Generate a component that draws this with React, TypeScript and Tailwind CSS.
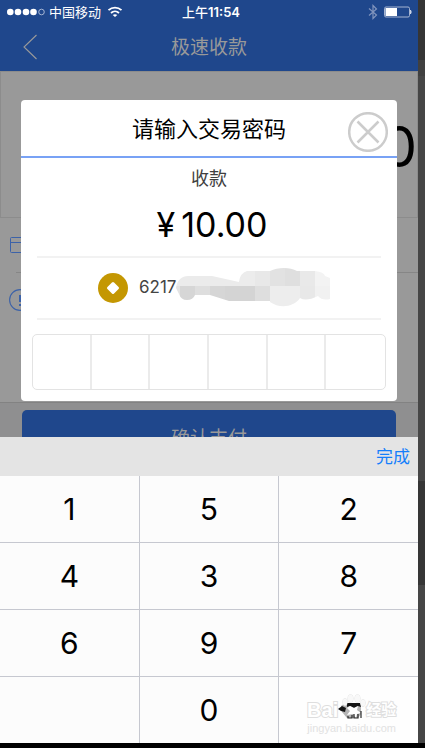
import React from "react";

const KEYS = ["1", "5", "2", "4", "3", "8", "6", "9", "7"];

const MOSAIC: [number, number, number, number, string][] = [
  [176, 266, 64, 19, "#ebebeb"],
  [240, 266, 15, 19, "#ececec"],
  [255, 266, 15, 19, "#e8e8e8"],
  [270, 266, 15, 19, "#e2e2e2"],
  [285, 266, 15, 19, "#dfdfdf"],
  [300, 266, 15, 19, "#e9e9e9"],
  [315, 266, 15, 19, "#f3f3f3"],
  [176, 285, 4, 15, "#e3e3e3"],
  [180, 285, 15, 15, "#d6d6d6"],
  [195, 285, 15, 15, "#dedede"],
  [210, 285, 15, 15, "#d6d6d6"],
  [225, 285, 30, 15, "#d4d4d4"],
  [255, 285, 15, 15, "#dedede"],
  [270, 285, 30, 21, "#ededed"],
  [300, 285, 15, 15, "#e8e8e8"],
  [315, 285, 15, 15, "#f1f1f1"],
];

function StatusBar() {
  return (
    <div className="grid h-6 grid-cols-3 items-center px-2 text-[13px] leading-6 text-white">
      <div className="flex items-center gap-1">
        <svg className="-ml-px h-2 w-[38px] shrink-0" viewBox="0 0 38 8" aria-hidden="true">
          <circle cx="3.3" cy="4" r="3.3" fill="white" />
          <circle cx="11" cy="4" r="3.3" fill="white" />
          <circle cx="19" cy="4" r="3.3" fill="white" />
          <circle cx="26.5" cy="4" r="3.3" fill="white" />
          <circle cx="34.5" cy="4" r="2.8" fill="none" stroke="#c5cfe3" strokeWidth="0.8" />
        </svg>
        <span className="whitespace-nowrap">中国移动</span>
        <svg className="ml-0.5 h-3 w-4 shrink-0" viewBox="0 0 16 12" fill="none" stroke="white" strokeWidth="1.8" aria-hidden="true">
          <path d="M1.5 4.2C5.2 0.7 10.8 0.7 14.5 4.2" />
          <path d="M4 7C6.3 4.9 9.7 4.9 12 7" />
          <path d="M8 11L5.7 8.9C7 7.9 9 7.9 10.3 8.9Z" fill="white" stroke="none" />
        </svg>
      </div>
      <div className="pl-1 text-center font-medium whitespace-nowrap">
        上午<span className="font-semibold">11:54</span>
      </div>
      <div className="-mr-0.5 flex items-center justify-end gap-1.5">
        <svg className="h-4 w-2.5" viewBox="0 0 10 16" fill="none" stroke="#8094bd" strokeWidth="1.2" aria-hidden="true">
          <path d="M1 4.5L8.5 11L5 14.5V1.5L8.5 5L1 11.5" />
        </svg>
        <svg className="h-3 w-7" viewBox="0 0 28 12" aria-hidden="true">
          <rect x="0.5" y="1" width="25" height="10" rx="1.5" fill="none" stroke="#a5b4d1" />
          <rect x="1.5" y="2" width="11.5" height="8" fill="white" />
          <path d="M26.5 4Q28 6 26.5 8Z" fill="#d5ddec" stroke="#d5ddec" strokeWidth="0.8" />
        </svg>
      </div>
    </div>
  );
}

function PaymentPage() {
  return (
    <div className="min-h-0 flex-1 overflow-hidden bg-[#999999]">
      <header className="h-[71px] bg-[#1f478c]">
        <StatusBar />
        <div className="grid h-[47px] grid-cols-3 items-center">
          <button type="button" aria-label="返回" className="ml-[23px] h-7 w-4">
            <svg className="h-7 w-4" viewBox="0 0 16 28" fill="none" stroke="#9a9a9a" strokeWidth="1.1" aria-hidden="true">
              <path d="M13.5 1L1 13L13.5 25" />
            </svg>
          </button>
          <h1 className="pt-0.5 text-center text-[19px] whitespace-nowrap text-[#999999]">极速收款</h1>
        </div>
      </header>
      <section className="flex h-[147px] items-center justify-end border border-[#8c8c8c]">
        <span className="pt-1 text-[56px] leading-none text-black">10.00</span>
      </section>
      <div className="flex h-[54px] items-center pl-2.5">
        <svg className="h-4 w-5" viewBox="0 0 20 16" fill="none" stroke="#3c62a8" aria-hidden="true">
          <rect x="0.5" y="0.5" width="19" height="15" rx="1" />
          <path d="M0 5.5H20" />
        </svg>
      </div>
      <div className="ml-4 border-t border-[#868686]" />
      <div className="flex h-[54px] items-center pl-[9px]">
        <svg className="h-[22px] w-[22px]" viewBox="0 0 22 22" fill="none" stroke="#3c62a8" aria-hidden="true">
          <circle cx="11" cy="11" r="10.4" strokeWidth="1.1" />
          <path d="M11 6V13M11 15V17" strokeWidth="2" />
        </svg>
      </div>
      <div className="mt-[75px] border-t border-[#828282] bg-[#8f8f90] px-[22px] pt-[7px] pb-20">
        <button type="button" className="h-[58px] w-full rounded-[5px] bg-[#1f478c] text-[19px] text-[#999999]">
          确认支付
        </button>
      </div>
    </div>
  );
}

function PasswordDialog() {
  return (
    <div role="dialog" aria-label="请输入交易密码" className="absolute inset-x-[21px] top-[100px] rounded-[4px] bg-white pb-[11px]">
      <div className="grid h-[58px] grid-cols-[1fr_auto_1fr] items-center border-b-2 border-[#78a2f5]">
        <h2 className="col-start-2 pt-0.5 text-[22px] whitespace-nowrap text-black">请输入交易密码</h2>
        <button type="button" aria-label="关闭" className="mt-2 mr-[9px] h-10 w-10 justify-self-end">
          <svg className="h-10 w-10" viewBox="0 0 40 40" fill="none" stroke="#cccccc" strokeWidth="2.5" aria-hidden="true">
            <circle cx="20" cy="20" r="18.8" />
            <path d="M9.5 9.5L30.5 30.5M30.5 9.5L9.5 30.5" />
          </svg>
        </button>
      </div>
      <div className="px-4">
        <p className="pt-[7px] text-center text-[18px] leading-7 text-[#404040]">收款</p>
        <p className="flex justify-center gap-1.5 pt-2 pb-[7px] pl-1.5 text-[34px] leading-[48px] text-black">
          <span>¥</span>
          <span>10.00</span>
        </p>
        <div className="flex h-16 items-center border-y-2 border-[#f2f2f2] pl-[61px]">
          <svg className="h-[30px] w-[30px] shrink-0" viewBox="0 0 30 30" aria-hidden="true">
            <circle cx="15" cy="15" r="15" fill="#c49702" />
            <rect x="10.3" y="10.3" width="9.4" height="9.4" rx="1.5" fill="white" transform="rotate(45 15 15)" />
          </svg>
          <span className="ml-[11px] w-[37px] text-[17px] text-[#444444]">6217</span>
          <svg className="h-[42px] w-[156px] shrink-0" viewBox="176 266 156 42" aria-hidden="true">
            <defs>
              <clipPath id="card-mask">
                <path d="M176 287C177 279 182 275 188 275H212L239 281Q240 272 247 270H270C278 266 290 266 297 270H315Q324 271 325 275L330 277V298Q322 300 318 295Q306 301 300 297C294 306 280 308 270 301V300H229L210 294H195Q193 299 187 299Q181 299 179 293Z" />
              </clipPath>
            </defs>
            <g clipPath="url(#card-mask)" shapeRendering="crispEdges">
              {MOSAIC.map(([x, y, w, h, fill]) => (
                <rect key={`${x}-${y}`} x={x} y={y} width={w} height={h} fill={fill} />
              ))}
            </g>
          </svg>
        </div>
      </div>
      <div className="mx-[11px] mt-[14px] grid h-14 grid-cols-6 divide-x-2 divide-[#ebebeb] overflow-hidden rounded-[5px] border border-[#e3e3e3]">
        {[1, 2, 3, 4, 5, 6].map((n) => (
          <input key={n} type="password" maxLength={1} aria-label={`密码第${n}位`} className="min-w-0 text-center outline-none" />
        ))}
      </div>
    </div>
  );
}

function Watermark() {
  return (
    <div className="flex flex-col items-center pt-2 pl-1.5 font-['Liberation_Sans','Noto_Sans_CJK_SC',sans-serif]">
      <div className="flex items-end font-bold text-white [paint-order:stroke_fill] [-webkit-text-stroke:2px_#dedede]">
        <span className="text-[20px] leading-6">Bai</span>
        <svg className="h-7 w-7" viewBox="0 0 28 28" aria-hidden="true">
          <path d="M3 12L7 9H22L23 13V20L20 24H9L4 18Z" fill="#b4b4b4" />
          <path d="M0 15L4 12L8 14L7 18L3 17Z" fill="#151515" />
          <path d="M9 9H22L23 13L20 12L16 14L12 12L9 13Z" fill="#151515" />
          <g fill="#f8f8f8" stroke="#dddddd" strokeWidth="0.8">
            <ellipse cx="7" cy="8" rx="2.2" ry="3.6" />
            <ellipse cx="12.5" cy="4.5" rx="2.6" ry="4" />
            <ellipse cx="19.5" cy="4.5" rx="2.6" ry="4" />
            <ellipse cx="25" cy="9" rx="2.2" ry="3.6" />
          </g>
          <path d="M12 12L16 14L20 12L19 16L23 19L19 20L18 24L15 20L9 21L12 17L9 14Z" fill="white" />
          <path d="M10 22V24H14V21M16 20V24H20V20M23 17V24" fill="none" stroke="#2a2a2a" strokeWidth="1.2" />
        </svg>
        <span className="text-[15px] leading-6">经验</span>
      </div>
      <span className="text-[11px] leading-3 text-[#e2e2e2]">jingyan.baidu.com</span>
    </div>
  );
}

function Keypad() {
  return (
    <div className="shrink-0">
      <div className="flex h-[39px] items-center justify-end bg-[#e4e4e4] px-2 pt-0.5">
        <button type="button" className="text-[17px] text-[#147efb]">
          完成
        </button>
      </div>
      <div className="grid auto-rows-[66px] grid-cols-3 gap-px bg-[#c6c8d0] text-[30px] text-black">
        {KEYS.map((k) => (
          <button key={k} type="button" className="bg-[#fcfcfc]">
            {k}
          </button>
        ))}
        <div className="bg-[#fcfcfc]" />
        <button type="button" className="bg-[#fcfcfc]">
          0
        </button>
        <button type="button" aria-label="删除" className="bg-[#fefefe]">
          <Watermark />
        </button>
      </div>
    </div>
  );
}

export default function App() {
  return (
    <div className="flex h-screen flex-col overflow-hidden bg-black font-['Inter','Noto_Sans_CJK_SC',sans-serif]">
      <div className="flex min-h-0 flex-1">
        <main className="relative flex min-w-0 flex-1 flex-col">
          <PaymentPage />
          <PasswordDialog />
          <Keypad />
        </main>
        <aside className="flex w-[7px] shrink-0 flex-col bg-[#464646]">
          <div className="h-[60px] bg-[#353535]" />
          <div className="h-4 bg-[#404040]" />
          <div className="mt-[405px] h-[104px] bg-[#363636]" />
        </aside>
      </div>
      <div className="h-[5px] shrink-0 bg-black" />
    </div>
  );
}
